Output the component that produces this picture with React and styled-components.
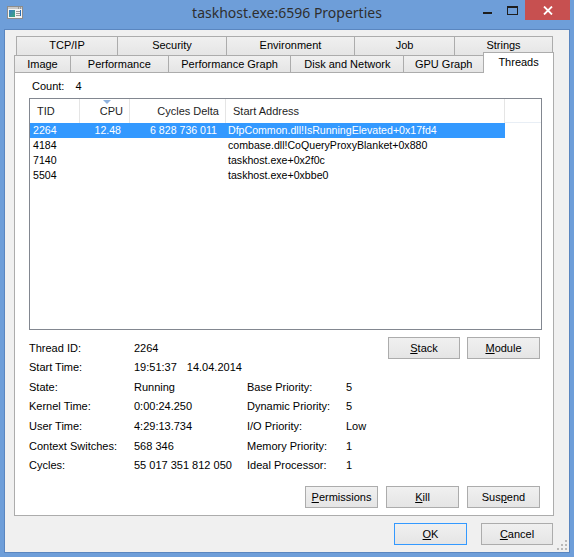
import React from "react";
import styled, { createGlobalStyle } from "styled-components";

const GlobalStyle = createGlobalStyle`
  html, body { margin: 0; padding: 0; }
  body { width: 574px; height: 557px; overflow: hidden; background: #6e9ed9; }
  * { box-sizing: border-box; }
`;

const Frame = styled.div`
  width: 574px;
  height: 557px;
  background: #6e9ed9;
  display: flex;
  flex-direction: column;
  padding: 0 4px 4px 4px;
  font-family: "Liberation Sans", Arial, sans-serif;
  font-size: 11px;
  color: #000;
`;

const TitleBar = styled.div`
  height: 29px;
  flex: none;
  display: grid;
  grid-template-columns: 1fr auto 1fr;
  align-items: start;
`;

const AppIcon = styled.svg`
  margin: 6px 0 0 3px;
  display: block;
`;

const Title = styled.div`
  font-family: "Noto Sans", "Open Sans", sans-serif;
  font-size: 14px;
  line-height: 20px;
  padding-top: 3px;
  color: #2e2e2e;
  white-space: nowrap;
`;

const Controls = styled.div`
  justify-self: end;
  display: flex;
`;

const CtrlButton = styled.div`
  width: ${(p) => p.$w}px;
  height: 20px;
  display: flex;
  align-items: center;
  justify-content: center;
  background: ${(p) => (p.$close ? "#c75050" : "transparent")};
`;

const Client = styled.div`
  flex: 1;
  position: relative;
  background: #f0f0f0;
  border: 1px solid #5a86c0;
  padding: 6px 15px 0 9px;
  display: flex;
  flex-direction: column;
`;

const TabRow = styled.div`
  display: flex;
  align-items: flex-end;
  height: ${(p) => p.$h}px;
  padding-left: ${(p) => p.$indent}px;
`;

const Tab = styled.div`
  width: ${(p) => p.$w}px;
  height: ${(p) => (p.$active ? 21 : p.$h)}px;
  margin-left: -1px;
  margin-bottom: ${(p) => (p.$active ? -1 : 0)}px;
  position: relative;
  z-index: ${(p) => (p.$active ? 2 : 0)};
  border: 1px solid #acacac;
  border-bottom: none;
  background: ${(p) =>
    p.$active ? "#ffffff" : "linear-gradient(#f0f0f0, #e5e5e5)"};
  display: flex;
  justify-content: center;
  padding-top: ${(p) => (p.$active ? 3 : 2)}px;
  line-height: 13px;
  white-space: nowrap;
  &:first-child { margin-left: 0; }
`;

const Panel = styled.div`
  height: 444px;
  flex: none;
  background: #fff;
  border: 1px solid #acacac;
  position: relative;
  z-index: 1;
  display: flex;
  flex-direction: column;
  padding: 6px 12px 7px 14px;
`;

const CountRow = styled.div`
  display: flex;
  gap: 11px;
  line-height: 14px;
  padding-left: 3px;
`;

const ListView = styled.div`
  margin-top: 5px;
  width: 513px;
  height: 232px;
  border: 1px solid #828790;
  background: #fff;
  font-size: 10.6px;
`;

const Header = styled.div`
  display: flex;
  height: 24px;
`;

const HeadCell = styled.div`
  position: relative;
  width: ${(p) => p.$w}px;
  flex: ${(p) => (p.$fill ? 1 : "none")};
  border-right: ${(p) => (p.$fill ? "none" : "1px solid #e5e5e5")};
  border-bottom: ${(p) => (p.$fill ? "1px solid #e8eef5" : "none")};
  display: flex;
  align-items: center;
  justify-content: ${(p) => (p.$right ? "flex-end" : "flex-start")};
  padding: 0 6px 0 7px;
  font-size: 11px;
  color: #1e1e1e;
`;

const SortArrow = styled.svg`
  position: absolute;
  top: 1px;
  left: 23px;
`;

const Row = styled.div`
  display: flex;
  height: 15px;
  width: 475px;
  background: ${(p) => (p.$selected ? "#3399ff" : "transparent")};
  color: ${(p) => (p.$selected ? "#fff" : "#000")};
`;

const Cell = styled.div`
  width: ${(p) => p.$w}px;
  line-height: 15px;
  white-space: nowrap;
  text-align: ${(p) => (p.$right ? "right" : "left")};
  padding: ${(p) => (p.$right ? "0 9px 0 0" : `0 0 0 ${p.$pad ?? 3}px`)};
`;

const Details = styled.div`
  margin-top: 8px;
  margin-right: 1px;
  display: grid;
  grid-template-columns: 105px 113px 99px 1fr;
  grid-template-rows: 19px 20px 19px 20px 20px 19px 20px;
  align-items: center;
`;

const DateText = styled.span`
  display: flex;
  gap: 10px;
`;

const ButtonGroup = styled.div`
  grid-column: 3 / 5;
  grid-row: 1 / 3;
  justify-self: end;
  align-self: start;
  margin-top: -1px;
  display: flex;
  gap: ${(p) => p.$gap}px;
`;

const Button = styled.button`
  width: ${(p) => p.$w || 73}px;
  height: 22px;
  padding: 0;
  font-family: "Liberation Sans", Arial, sans-serif;
  font-size: 11px;
  color: #000;
  border: 1px solid ${(p) => (p.$default ? "#3399ff" : "#acacac")};
  background: linear-gradient(#f0f0f0, #e5e5e5);
  u { text-decoration: underline; }
`;

const ActionRow = styled.div`
  margin-top: auto;
  margin-right: 1px;
  display: flex;
  justify-content: flex-end;
  gap: 8px;
`;

const DialogButtons = styled.div`
  margin-top: 7px;
  display: flex;
  justify-content: flex-end;
  gap: 14px;
  margin-right: 1px;
`;

const Grip = styled.svg`
  position: absolute;
  right: 2px;
  bottom: 2px;
`;

const columns = [
  { key: "tid", title: "TID", w: 50 },
  { key: "cpu", title: "CPU", w: 50, right: true },
  { key: "delta", title: "Cycles Delta", w: 96, right: true },
  { key: "addr", title: "Start Address", w: 279 },
];

const threads = [
  { tid: "2264", cpu: "12.48", delta: "6 828 736 011", addr: "DfpCommon.dll!IsRunningElevated+0x17fd4", selected: true },
  { tid: "4184", cpu: "", delta: "", addr: "combase.dll!CoQueryProxyBlanket+0x880" },
  { tid: "7140", cpu: "", delta: "", addr: "taskhost.exe+0x2f0c" },
  { tid: "5504", cpu: "", delta: "", addr: "taskhost.exe+0xbbe0" },
];

const topTabs = [
  ["TCP/IP", 102],
  ["Security", 110],
  ["Environment", 129],
  ["Job", 101],
  ["Strings", 99],
];

const bottomTabs = [
  ["Image", 57],
  ["Performance", 99],
  ["Performance Graph", 124],
  ["Disk and Network", 114],
  ["GPU Graph", 81],
];

const Mn = ({ text, at }) => (
  <>
    {text.slice(0, at)}
    <u>{text[at]}</u>
    {text.slice(at + 1)}
  </>
);

export default function App() {
  return (
    <>
      <GlobalStyle />
      <Frame>
        <TitleBar>
          <AppIcon width="16" height="13" viewBox="0 0 16 13">
            <rect x="0.5" y="0.5" width="15" height="12" fill="#f4f4f4" stroke="#8c8c8c" />
            <rect x="1" y="1" width="14" height="2" fill="#c8c8c8" />
            <rect x="11" y="1.5" width="1" height="1" fill="#666" />
            <rect x="13" y="1.5" width="1" height="1" fill="#666" />
            <defs>
              <linearGradient id="ig" x1="0" y1="0" x2="1" y2="1">
                <stop offset="0" stopColor="#3a7bc8" />
                <stop offset="1" stopColor="#3aa87a" />
              </linearGradient>
            </defs>
            <rect x="2" y="4" width="6" height="7" fill="url(#ig)" />
            <rect x="9" y="5" width="5" height="1" fill="#9a9a9a" />
            <rect x="9" y="7" width="5" height="1" fill="#9a9a9a" />
            <rect x="9" y="9" width="4" height="1" fill="#9a9a9a" />
            <rect x="13" y="4" width="1" height="6" fill="#2a6fb8" />
          </AppIcon>
          <Title>taskhost.exe:6596 Properties</Title>
          <Controls>
            <CtrlButton $w={26}>
              <svg width="10" height="10" viewBox="0 0 10 10">
                <rect x="1" y="7" width="9" height="2" fill="#1e1e1e" />
              </svg>
            </CtrlButton>
            <CtrlButton $w={25}>
              <svg width="11" height="9" viewBox="0 0 11 9">
                <rect x="0.5" y="0.5" width="10" height="8" fill="none" stroke="#1e1e1e" />
                <rect x="0" y="0" width="11" height="2" fill="#1e1e1e" />
              </svg>
            </CtrlButton>
            <CtrlButton $w={45} $close>
              <svg width="10" height="9" viewBox="0 0 10 9">
                <path d="M1 0.5 L9 8.5 M9 0.5 L1 8.5" stroke="#fff" strokeWidth="1.8" />
              </svg>
            </CtrlButton>
          </Controls>
        </TitleBar>

        <Client>
          <TabRow $h={19} $indent={2}>
            {topTabs.map(([t, w]) => (
              <Tab key={t} $w={w} $h={19}>{t}</Tab>
            ))}
          </TabRow>
          <TabRow $h={17} $indent={0}>
            {bottomTabs.map(([t, w]) => (
              <Tab key={t} $w={w} $h={17}>{t}</Tab>
            ))}
            <Tab $w={71} $active>Threads</Tab>
          </TabRow>

          <Panel>
            <CountRow>
              <span>Count:</span>
              <span>4</span>
            </CountRow>

            <ListView>
              <Header>
                {columns.map((c) => (
                  <HeadCell key={c.key} $w={c.w} $right={c.right}>
                    {c.key === "cpu" && (
                      <SortArrow width="8" height="4" viewBox="0 0 8 4">
                        <path d="M0 0 L8 0 L4 4 Z" fill="#8fb2dc" />
                      </SortArrow>
                    )}
                    {c.title}
                  </HeadCell>
                ))}
                <HeadCell $fill />
              </Header>
              {threads.map((t) => (
                <Row key={t.tid} $selected={t.selected}>
                  {columns.map((c) => (
                    <Cell key={c.key} $w={c.w} $right={c.right} $pad={c.key === "addr" ? 2 : 3}>
                      {t[c.key]}
                    </Cell>
                  ))}
                </Row>
              ))}
            </ListView>

            <Details>
              <span>Thread ID:</span>
              <span>2264</span>
              <ButtonGroup $gap={7}>
                <Button $w={72}><Mn text="Stack" at={0} /></Button>
                <Button><Mn text="Module" at={0} /></Button>
              </ButtonGroup>
              <span>Start Time:</span>
              <DateText>
                <span>19:51:37</span>
                <span>14.04.2014</span>
              </DateText>

              <span>State:</span>
              <span>Running</span>
              <span>Base Priority:</span>
              <span>5</span>

              <span>Kernel Time:</span>
              <span>0:00:24.250</span>
              <span>Dynamic Priority:</span>
              <span>5</span>

              <span>User Time:</span>
              <span>4:29:13.734</span>
              <span>I/O Priority:</span>
              <span>Low</span>

              <span>Context Switches:</span>
              <span>568 346</span>
              <span>Memory Priority:</span>
              <span>1</span>

              <span>Cycles:</span>
              <span>55 017 351 812 050</span>
              <span>Ideal Processor:</span>
              <span>1</span>
            </Details>

            <ActionRow>
              <Button><Mn text="Permissions" at={0} /></Button>
              <Button><Mn text="Kill" at={0} /></Button>
              <Button><Mn text="Suspend" at={3} /></Button>
            </ActionRow>
          </Panel>

          <DialogButtons>
            <Button $default><Mn text="OK" at={0} /></Button>
            <Button $w={72}><Mn text="Cancel" at={0} /></Button>
          </DialogButtons>

          <Grip width="10" height="10" viewBox="0 0 10 10">
            <rect x="8" y="0" width="2" height="2" fill="#b8b8b8" />
            <rect x="4" y="4" width="2" height="2" fill="#b8b8b8" />
            <rect x="8" y="4" width="2" height="2" fill="#b8b8b8" />
            <rect x="0" y="8" width="2" height="2" fill="#b8b8b8" />
            <rect x="4" y="8" width="2" height="2" fill="#b8b8b8" />
            <rect x="8" y="8" width="2" height="2" fill="#b8b8b8" />
          </Grip>
        </Client>
      </Frame>
    </>
  );
}
